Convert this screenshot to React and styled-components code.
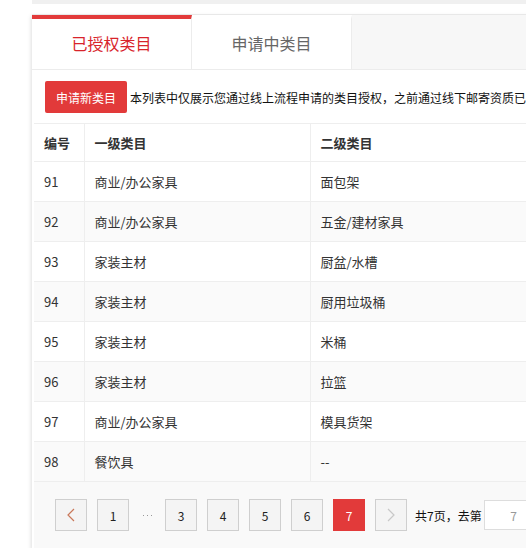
import React, { useState } from 'react'
import styled, { createGlobalStyle } from 'styled-components'

const GlobalStyle = createGlobalStyle`
    body {
        margin: 0;
        background: #fff;
        overflow: hidden;
        font-family: "Noto Sans CJK SC", "Noto Sans", sans-serif;
        color: #333;
    }
`

const rows = [
    { id: 91, first: '商业/办公家具', second: '面包架' },
    { id: 92, first: '商业/办公家具', second: '五金/建材家具' },
    { id: 93, first: '家装主材', second: '厨盆/水槽' },
    { id: 94, first: '家装主材', second: '厨用垃圾桶' },
    { id: 95, first: '家装主材', second: '米桶' },
    { id: 96, first: '家装主材', second: '拉篮' },
    { id: 97, first: '商业/办公家具', second: '模具货架' },
    { id: 98, first: '餐饮具', second: '--' },
]

const App = () => {
    const [tab, setTab] = useState(0)

    return (
        <Page>
            <GlobalStyle />
            <TopBar />
            <Card>
                <Tabs>
                    <Tab active={tab === 0} onClick={() => setTab(0)}>已授权类目</Tab>
                    <Tab active={tab === 1} onClick={() => setTab(1)}>申请中类目</Tab>
                </Tabs>
                <Body>
                    <Toolbar>
                        <PrimaryButton>申请新类目</PrimaryButton>
                        <Notice>本列表中仅展示您通过线上流程申请的类目授权，之前通过线下邮寄资质已授权的类目请在类目管理中查看</Notice>
                    </Toolbar>
                    <Table>
                        <colgroup>
                            <col style={{ width: 50 }} />
                            <col style={{ width: 226 }} />
                            <col />
                        </colgroup>
                        <thead>
                            <tr>
                                <Th>编号</Th>
                                <Th>一级类目</Th>
                                <Th>二级类目</Th>
                            </tr>
                        </thead>
                        <tbody>
                            {rows.map((r, i) => (
                                <Tr key={r.id} striped={i % 2 === 1}>
                                    <Td>{r.id}</Td>
                                    <Td>{r.first}</Td>
                                    <Td>{r.second}</Td>
                                </Tr>
                            ))}
                        </tbody>
                    </Table>
                    <Pager>
                        <PageBtn>
                            <svg width="8" height="14" viewBox="0 0 8 14">
                                <path d="M7 1 L1 7 L7 13" fill="none" stroke="#c9785a" strokeWidth="1.2" />
                            </svg>
                        </PageBtn>
                        <PageBtn>1</PageBtn>
                        <Dots>
                            <Dot /><Dot /><Dot />
                        </Dots>
                        <PageBtn>3</PageBtn>
                        <PageBtn>4</PageBtn>
                        <PageBtn>5</PageBtn>
                        <PageBtn>6</PageBtn>
                        <PageBtn active>7</PageBtn>
                        <PageBtn>
                            <svg width="8" height="14" viewBox="0 0 8 14">
                                <path d="M1 1 L7 7 L1 13" fill="none" stroke="#c8c8c8" strokeWidth="1.2" />
                            </svg>
                        </PageBtn>
                        <PageInfo>共7页，去第</PageInfo>
                        <PageInput defaultValue="7" />
                    </Pager>
                </Body>
            </Card>
        </Page>
    )
}

const Page = styled.div`
    padding-left: 32px;
    width: 760px;
`

const TopBar = styled.div`
    height: 4px;
    background: #f0f0f0;
    margin-bottom: 10px;
`

const Card = styled.div`
    box-shadow: -1px 2px 4px rgba(0, 0, 0, 0.13);
`

const Tabs = styled.div`
    display: flex;
    height: 54px;
    background: #f7f7f7;
    border-top: 1px solid #e8e8e8;
    border-bottom: 1px solid #ececec;
`

const Tab = styled.div`
    width: 160px;
    box-sizing: border-box;
    background: #fff;
    border-right: 1px solid #ececec;
    border-top: 4px solid ${p => p.active ? '#e23a3a' : 'transparent'};
    color: ${p => p.active ? '#d8242b' : '#666'};
    font-size: 16px;
    display: flex;
    align-items: center;
    justify-content: center;
    padding-bottom: 2px;
    cursor: pointer;
`

const Body = styled.div`
    margin-left: 2px;
    background: #fff;
`

const Toolbar = styled.div`
    display: flex;
    align-items: center;
    height: 53px;
    box-sizing: border-box;
    padding: 1px 0 0 11px;
    white-space: nowrap;
`

const PrimaryButton = styled.button`
    width: 82px;
    height: 32px;
    border: none;
    border-radius: 2px;
    background: #e23a3a;
    color: #fff;
    font-family: inherit;
    font-size: 12px;
    padding: 0;
    margin-right: 3px;
    cursor: pointer;
`

const Notice = styled.span`
    font-size: 12px;
    color: #111;
`

const Table = styled.table`
    width: 100%;
    border-collapse: collapse;
    table-layout: fixed;
    border-top: 1px solid #eee;
`

const Th = styled.th`
    height: 38px;
    box-sizing: border-box;
    text-align: left;
    padding: 0 0 0 10px;
    font-size: 13px;
    line-height: 18px;
    font-weight: bold;
    color: #333;
    border-right: 1px solid #eee;
    border-bottom: 1px solid #eee;
`

const Tr = styled.tr`
    background: ${p => p.striped ? '#fafafa' : '#fff'};
`

const Td = styled.td`
    height: 40px;
    box-sizing: border-box;
    padding: 0 0 0 10px;
    font-size: 13px;
    line-height: 18px;
    color: #333;
    border-right: 1px solid #eee;
    border-bottom: 1px solid #eee;
`

const Pager = styled.div`
    display: flex;
    align-items: center;
    gap: 10px;
    height: 66px;
    padding-left: 21px;
    background: #f9f9f9;
`

const PageBtn = styled.div`
    width: 32px;
    height: 32px;
    box-sizing: border-box;
    display: flex;
    align-items: center;
    justify-content: center;
    font-size: 12px;
    color: ${p => p.active ? '#fff' : '#222'};
    background: ${p => p.active ? '#e23a3a' : '#f4f4f4'};
    border: 1px solid ${p => p.active ? '#e23a3a' : '#cfcfcf'};
    cursor: pointer;
`

const Dots = styled.span`
    width: 16px;
    display: flex;
    justify-content: center;
    gap: 3px;
`

const Dot = styled.i`
    width: 1px;
    height: 1px;
    background: #999;
`

const PageInfo = styled.span`
    font-size: 12px;
    color: #111;
    margin-left: -2px;
    margin-right: -8px;
`

const PageInput = styled.input`
    width: 60px;
    height: 30px;
    box-sizing: border-box;
    border: 1px solid #ddd;
    background: #fff;
    text-align: center;
    font-size: 12px;
    color: #999;
    font-family: inherit;
`

export default App
